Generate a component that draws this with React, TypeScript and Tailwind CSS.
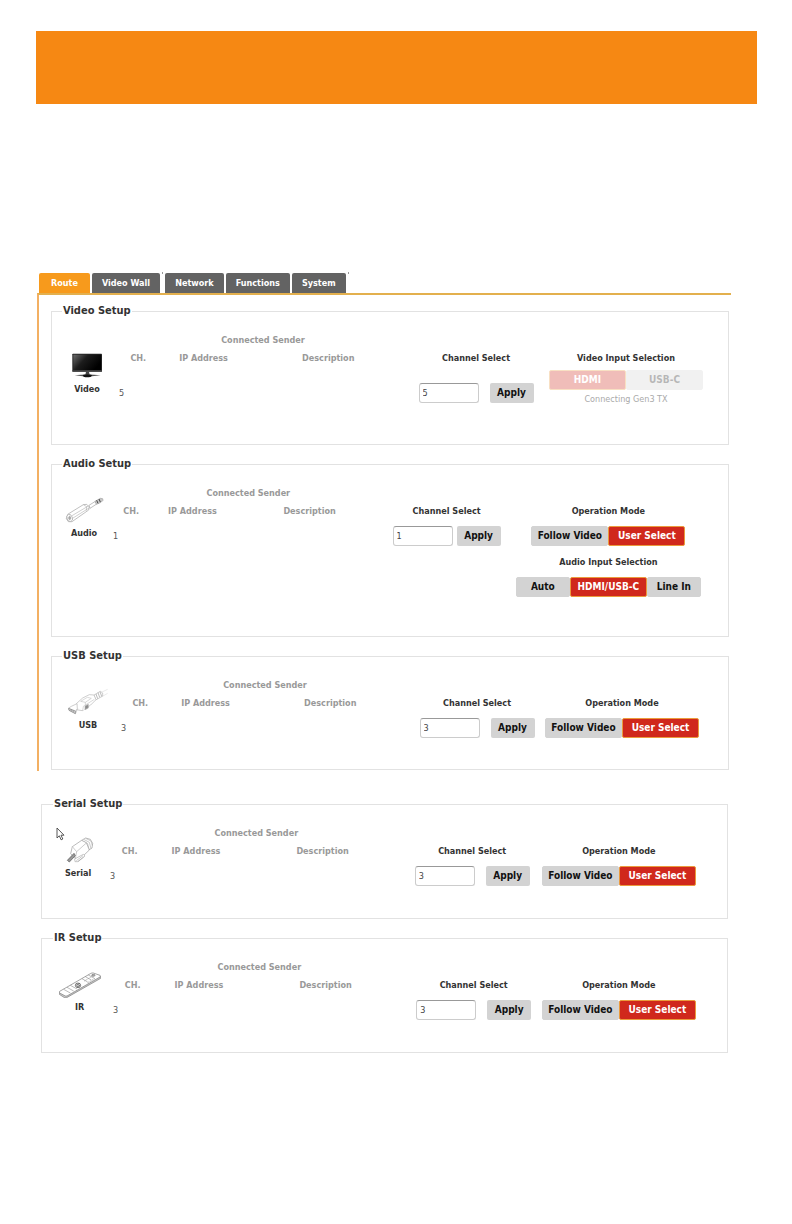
import React from 'react';

const tabGroups = [
  ['Route', 'Video Wall'],
  ['Network', 'Functions', 'System'],
];

const VideoIcon = () => (
  <svg viewBox="108 276 126 84" className="w-[42px] h-7" aria-hidden="true">
    <defs>
      <linearGradient id="screen" x1="0" y1="0" x2="1" y2="0.5">
        <stop offset="0" stopColor="#6b6b6b" />
        <stop offset="0.45" stopColor="#1c1c1c" />
        <stop offset="1" stopColor="#000" />
      </linearGradient>
    </defs>
    <rect x="127" y="281" width="89" height="54" rx="2" fill="#222" />
    <rect x="130" y="284" width="83" height="46" fill="url(#screen)" />
    <rect x="127" y="331" width="89" height="4" fill="#4a4a4a" />
    <path d="M168 335h9l2 9h-13z" fill="#444" />
    <path d="M134 346q38-5 78 0l-26 3q-14 4-28 0z" fill="#555" />
    <path d="M158 345q14-4 28 0l-3 5q-12 3-22 0z" fill="#111" />
  </svg>
);

const AudioIcon = () => (
  <svg viewBox="102 138 126 84" className="w-[42px] h-7" fill="#fff" stroke="#a0a0a0" strokeWidth="2" strokeLinejoin="round" aria-hidden="true">
    <path d="M180 166l19-12 4 8-20 13z" />
    <path d="M198 154l16-9 7 1 1 5-6 6-14 6z" fill="#c8c8c8" />
    <path d="M203 151l4 9M210 147l4 9" stroke="#444" strokeWidth="3" />
    <path d="M116 193l47-29 10-1 8 8-2 9-50 35-11 0-6-9z" />
    <path d="M129 197l49-29M129 206l51-32M163 164l10 6-1 12" strokeWidth="1.5" />
    <ellipse cx="122" cy="204" rx="8" ry="11" transform="rotate(-20 122 204)" />
    <ellipse cx="122" cy="204" rx="3" ry="5" fill="#aaa" />
  </svg>
);

const UsbIcon = () => (
  <svg viewBox="111 144 126 84" className="w-[42px] h-7" fill="#fff" stroke="#b5b5b5" strokeWidth="2" strokeLinejoin="round" aria-hidden="true">
    <path d="M212 158l21-10M214 171l19-11" stroke="#e0e0e0" />
    <path d="M192 165l19-11 7 5 0 9-21 12z" />
    <path d="M198 162l5 14M204 158l5 14M210 155l5 14" stroke="#999" />
    <path d="M140 190l18-16 20-10 14 1 6 14-16 16-25 17-18-3z" />
    <path d="M152 184l20-12 12 3-18 12zM158 213l2-14 33-21M166 187v8" strokeWidth="1.5" />
    <path d="M165 198l10-5v11l-10 5z" fill="#8c8c8c" />
    <path d="M116 204l8-5 17-8 1 15-5 14-20-10z" />
    <path d="M116 205l20 8 0 8-19-10zM123 208l1 5M129 211l1 5" fill="#ddd" stroke="#777" />
    <path d="M136 213l7-7" />
  </svg>
);

const SerialIcon = () => (
  <svg viewBox="81 138 126 84" className="w-[42px] h-7" fill="#fff" stroke="#999" strokeWidth="2" strokeLinejoin="round" aria-hidden="true">
    <path d="M155 151l12-7 14 4 7 12-2 14-11 7-15-9z" />
    <path d="M161 148l17 9 5 19M167 145l16 8 4 14M157 153l16 8 4 17" strokeWidth="1.5" />
    <path d="M127 170l28-19 14 7 9 22-26 25-16 1-14-15z" />
    <path d="M127 170l13 15-4 21M140 185l29-26" strokeWidth="1.5" />
    <path d="M112 211l20-21 4 7-18 19z" fill="#999" stroke="#555" />
    <path d="M134 207l26-14 5 5-21 17-9 0z" stroke="#aaa" />
    <path d="M139 212l20-15M144 214l17-13" stroke="#999" strokeWidth="1.5" />
  </svg>
);

const IrIcon = () => (
  <svg viewBox="87 135 126 84" className="w-[42px] h-7" fill="#fff" stroke="#777" strokeWidth="2" strokeLinejoin="round" aria-hidden="true">
    <path d="M88 202v6l17 11 5-1 102-58v-6z" fill="#ccc" />
    <path d="M89 199l92-53q5-3 9-2l20 7q4 2 0 5l-99 57-5 0-17-9q-3-3 0-5z" />
    <path d="M101 193l20 11M111 187l20 11M121 181l20 11M156 161l17 10M166 155l18 10M175 150l18 10" strokeWidth="1.5" />
    <path d="M163 168l25-15M173 173l24-14" strokeDasharray="4 3" stroke="#888" />
    <ellipse cx="144" cy="181" rx="8" ry="7" fill="#ddd" stroke="#444" />
    <path d="M139 181l9-5M141 186l9-5" stroke="#333" />
    <ellipse cx="190" cy="151" rx="5" ry="3" fill="#aaa" />
  </svg>
);

const operationMode = {
  title: 'Operation Mode',
  options: ['Follow Video', 'User Select'],
  active: 'User Select',
};

const audioInput = {
  title: 'Audio Input Selection',
  options: ['Auto', 'HDMI/USB-C', 'Line In'],
  active: 'HDMI/USB-C',
};

const videoInput = {
  title: 'Video Input Selection',
  options: ['HDMI', 'USB-C'],
  active: 'HDMI',
  disabled: true,
  note: 'Connecting Gen3 TX',
};

type Mode = {
  title: string;
  options: string[];
  active: string;
  disabled?: boolean;
  note?: string;
};

type Setup = {
  name: string;
  channel: string;
  icon: React.ReactNode;
  columns: string;
  padding: string;
  modes: Mode[];
  tall?: boolean;
  tight?: boolean;
};

const panelSetups: Setup[] = [
  {
    name: 'Video',
    channel: '5',
    icon: <VideoIcon />,
    columns: 'grid-cols-[62fr_290fr_136fr_164fr]',
    padding: 'pl-1 pr-5 pb-9',
    modes: [videoInput],
    tall: true,
  },
  {
    name: 'Audio',
    channel: '1',
    icon: <AudioIcon />,
    columns: 'grid-cols-[56fr_272fr_124fr_199fr]',
    padding: 'pl-1 pr-5 pb-[39px]',
    modes: [operationMode, audioInput],
    tight: true,
  },
  {
    name: 'USB',
    channel: '3',
    icon: <UsbIcon />,
    columns: 'grid-cols-[64fr_290fr_134fr_156fr]',
    padding: 'pl-1 pr-7 pb-[31px]',
    modes: [operationMode],
  },
];

const extraSetups: Setup[] = [
  {
    name: 'Serial',
    channel: '3',
    icon: <SerialIcon />,
    columns: 'grid-cols-[62fr_294fr_137fr_156fr]',
    padding: 'pl-[5px] pr-[30px] pb-8',
    modes: [operationMode],
  },
  {
    name: 'IR',
    channel: '3',
    icon: <IrIcon />,
    columns: 'grid-cols-[65fr_294fr_134fr_156fr]',
    padding: 'pl-[5px] pr-[30px] pb-8',
    modes: [operationMode],
  },
];

const ModeGroup = ({ mode }: { mode: Mode }) => (
  <div className="flex flex-col items-center" role="group" aria-label={mode.title}>
    <h3 className="leading-[18px] font-bold text-[#333]">{mode.title}</h3>
    <div className={mode.disabled ? 'flex mt-[3px] opacity-30' : 'flex mt-[6px]'}>
      {mode.options.map((option) => (
        <button
          key={option}
          type="button"
          disabled={mode.disabled}
          aria-pressed={option === mode.active}
          className={`h-5 rounded-xs border text-[10px] leading-4 font-bold whitespace-nowrap ${
            mode.options.length === 3 && option !== mode.active ? 'w-[54px]' : 'w-[77px]'
          } ${
            option === mode.active
              ? 'bg-[#d0281c] border-[#eb9a3c] text-white'
              : 'bg-[#d3d3d3] border-[#d3d3d3] text-[#111]'
          }`}
        >
          {option}
        </button>
      ))}
    </div>
    {mode.note && <p className="leading-[18px] text-[#aaa]">{mode.note}</p>}
  </div>
);

const SetupCard = ({ setup }: { setup: Setup }) => {
  const inputId = `${setup.name.toLowerCase()}-channel`;

  return (
    <fieldset className={`min-w-0 border border-[#e2e2e2] ${setup.padding}`}>
      <legend className="ml-[6px] px-px text-[11px] leading-4 font-bold text-[#333]">{setup.name} Setup</legend>
      <div className={`grid pt-3 text-[9px] ${setup.columns}`}>
        {/* Device */}
        <div className={`flex flex-col items-center ${setup.tall ? 'pt-[21px]' : 'pt-3'}`}>
          {setup.icon}
          <span className="leading-[18px] font-bold text-[#333]">{setup.name}</span>
        </div>

        {/* Connected sender */}
        <table className="w-full table-fixed self-start text-[#999]">
          <colgroup>
            <col className="w-[14%]" />
            <col className="w-[31%]" />
            <col className="w-[55%]" />
          </colgroup>
          <thead>
            <tr>
              <th colSpan={3} className="p-0 leading-[18px]">Connected Sender</th>
            </tr>
            <tr>
              <th className="p-0 leading-[18px]">CH.</th>
              <th className="p-0 leading-[18px]">IP Address</th>
              <th className="p-0 leading-[18px]">Description</th>
            </tr>
          </thead>
          <tbody>
            <tr>
              <td className={`pb-0 px-px leading-5 text-[#555] ${setup.tall ? 'pt-4' : 'pt-[6px]'}`}>{setup.channel}</td>
              <td></td>
              <td></td>
            </tr>
          </tbody>
        </table>

        {/* Channel select */}
        <div className="flex flex-col items-center pt-[18px]">
          <label htmlFor={inputId} className="leading-[18px] font-bold text-[#333]">Channel Select</label>
          <div className={`flex ${setup.tall ? 'mt-4' : 'mt-[6px]'} ${setup.tight ? 'gap-1' : 'gap-[11px]'}`}>
            <input
              id={inputId}
              type="text"
              defaultValue={setup.channel}
              className="w-[60px] h-5 rounded-[3px] border border-[#ccc] border-t-[#999] bg-white px-[3px] text-[#444]"
            />
            <button type="button" className="w-11 h-5 rounded-xs bg-[#d3d3d3] text-[10px] leading-4 font-bold text-[#111]">
              Apply
            </button>
          </div>
        </div>

        {/* Modes */}
        <div className="flex flex-col gap-[7px] pt-[18px]">
          {setup.modes.map((mode) => (
            <ModeGroup key={mode.title} mode={mode} />
          ))}
        </div>
      </div>
    </fieldset>
  );
};

const App = () => {
  return (
    <div className="min-h-screen bg-white pl-9 pr-[35px] pt-[31px] pb-12 font-['DejaVu_Sans_Condensed','DejaVu_Sans',sans-serif]">
      <header className="h-[73px] bg-[#f68813]"></header>

      <main className="pt-[169px] pl-px pr-[26px]">
        {/* Tabs */}
        <nav className="flex gap-[2px] pl-[2px]">
          {tabGroups.map((group) => (
            <div key={group[0]} className="flex">
              <div className="flex gap-[2px]">
                {group.map((tab) => (
                  <a
                    key={tab}
                    href="#"
                    className={`h-5 rounded-t-xs text-[9px] leading-5 font-bold text-white whitespace-nowrap ${
                      tab === 'Route' ? 'px-3 bg-[#f79a1c]' : 'px-[10px] bg-[#636363]'
                    }`}
                  >
                    {tab}
                  </a>
                ))}
              </div>
              <span className="ml-[2px] -mt-px h-[2px] w-px bg-[#999]"></span>
            </div>
          ))}
        </nav>

        <section className="flex flex-col gap-[11px] border-t-2 border-l-2 border-t-[#e3b04e] border-l-[#f3b063] pt-2 pl-3 pr-[2px] pb-px">
          {panelSetups.map((setup) => (
            <SetupCard key={setup.name} setup={setup} />
          ))}
        </section>

        <section className="relative flex flex-col gap-[11px] pt-[25px] pl-1 pr-[3px]">
          {extraSetups.map((setup) => (
            <SetupCard key={setup.name} setup={setup} />
          ))}
          <svg viewBox="0 0 9 14" className="absolute top-[56px] left-[19px] w-[9px] h-[14px]" aria-hidden="true">
            <path d="M1 1v10l2.300-2.200 1.800 4 1.700-.8-1.800-3.800h3z" fill="#fff" stroke="#444" strokeWidth="0.9" />
          </svg>
        </section>
      </main>
    </div>
  );
};

export default App;
